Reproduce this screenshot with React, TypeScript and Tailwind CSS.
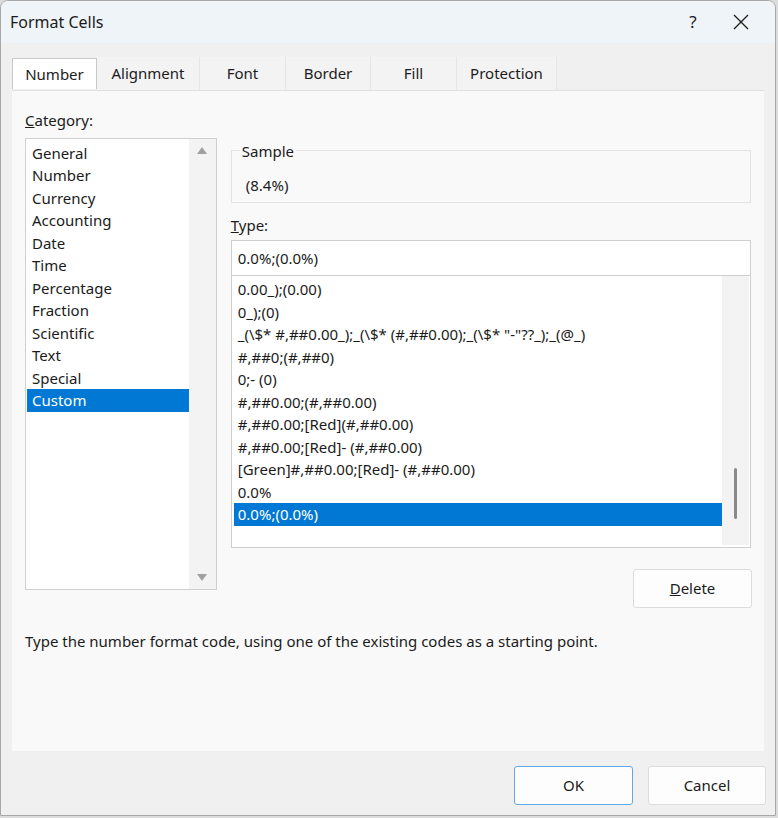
import React from "react";

const cats = ["General","Number","Currency","Accounting","Date","Time","Percentage","Fraction","Scientific","Text","Special","Custom"];
const types = ["0.00_);(0.00)","0_);(0)","_(\\$* #,##0.00_);_(\\$* (#,##0.00);_(\\$* \"-\"??_);_(@_)","#,##0;(#,##0)","0;- (0)","#,##0.00;(#,##0.00)","#,##0.00;[Red](#,##0.00)","#,##0.00;[Red]- (#,##0.00)","[Green]#,##0.00;[Red]- (#,##0.00)","0.0%","0.0%;(0.0%)"];

export default function App() {
  return (
    <div className="w-[778px] h-[818px] bg-[#dcdcdc] text-[15px] text-[#1b1b1b]" style={{ fontFamily: "'Noto Sans', 'Open Sans', sans-serif" }}>
      <div className="w-[776px] h-[816px] bg-[#f0f0f0] border border-[#a8a8a8] rounded-t-[8px] flex flex-col overflow-hidden">
        <div className="h-[42px] bg-[#eef4f7] flex items-center pl-[9px] shrink-0">
          <span className="text-[16px] flex-1">Format Cells</span>
          <span className="w-[60px] text-center text-[17px]">?</span>
          <svg width="16" height="16" viewBox="0 0 16 16" className="mr-[26px] ml-[10px]"><path d="M1 1L15 15M15 1L1 15" stroke="#1b1b1b" strokeWidth="1.3" /></svg>
        </div>
        <div className="flex pl-[11px] mt-[14px] h-[33px] text-[15px]">
          <div className="w-[85px] flex items-center justify-center bg-white border border-[#c9c9c9] border-b-0 relative z-10 h-[31px] mt-[1px]">Number</div>
          {[["Alignment",103],["Font",86],["Border",85],["Fill",86],["Protection",100]].map(([t,w]) => (
            <div key={t as string} style={{ width: w as number }} className="flex items-center justify-center bg-[#f3f3f3] border-r border-[#e6e6e6]">{t}</div>
          ))}
        </div>
        <div className="mx-[11px] bg-[#f9f9f9] border-t border-[#e0e0e0] h-[661px] relative px-[13px] pt-[18px]">
          <div className="mb-[6px]"><u>C</u>ategory:</div>
          <div className="flex gap-[14px]">
            <div className="w-[192px] h-[452px] bg-white border border-[#cfcfcf] flex">
              <div className="flex-1 pt-[3px]">
                {cats.map(c => (
                  <div key={c} className={`h-[22.5px] leading-[22.5px] pl-[5px] ml-[1px] ${c === "Custom" ? "bg-[#0078d4] text-white" : ""}`}>{c}</div>
                ))}
              </div>
              <div className="w-[27px] bg-[#f3f3f3] flex flex-col justify-between items-center py-[8px]">
                <svg width="10" height="7" viewBox="0 0 10 7"><path d="M5 0L10 7H0Z" fill="#a0a0a0" /></svg>
                <svg width="10" height="7" viewBox="0 0 10 7"><path d="M5 7L10 0H0Z" fill="#a0a0a0" /></svg>
              </div>
            </div>
            <div className="w-[521px] pt-[12px]">
              <div className="h-[53px] border border-[#e3e3e3] relative pl-[14px]">
                <span className="absolute -top-[11px] left-[8px] bg-[#f9f9f9] px-[2px]">Sample</span>
                <div className="pt-[23px]">(8.4%)</div>
              </div>
              <div className="mt-[11px] mb-[4px]"><u>T</u>ype:</div>
              <div className="h-[36px] bg-white border border-[#cfcfcf] flex items-center pl-[6px]">0.0%;(0.0%)</div>
              <div className="h-[272px] bg-white border border-[#cfcfcf] border-t-0 flex">
                <div className="flex-1 pt-[2px] pl-[2px]">
                  {types.map((t, i) => (
                    <div key={i} className={`h-[22.5px] leading-[22.5px] pl-[4px] whitespace-nowrap ${i === types.length - 1 ? "bg-[#0078d4] text-white" : ""}`}>{t}</div>
                  ))}
                </div>
                <div className="w-[27px] bg-[#f3f3f3] relative mb-[2px] mr-[1px]">
                  <div className="absolute left-[12px] top-[192px] w-[3px] h-[51px] rounded bg-[#8a8a8a]" />
                </div>
              </div>
              <div className="flex justify-end mt-[21px]">
                <div className="w-[119px] h-[39px] bg-[#fdfdfd] border border-[#dcdcdc] rounded-[3px] flex items-center justify-center mr-[-1px]"><span><u>D</u>elete</span></div>
              </div>
            </div>
          </div>
          <div className="mt-[22px]">Type the number format code, using one of the existing codes as a starting point.</div>
        </div>
        <div className="flex justify-end gap-[15px] pr-[9px] mt-[15px]">
          <div className="w-[119px] h-[39px] bg-[#fdfdfd] border border-[#62a8e6] rounded-[3px] flex items-center justify-center">OK</div>
          <div className="w-[118px] h-[39px] bg-[#fdfdfd] border border-[#dcdcdc] rounded-[3px] flex items-center justify-center">Cancel</div>
        </div>
      </div>
    </div>
  );
}
